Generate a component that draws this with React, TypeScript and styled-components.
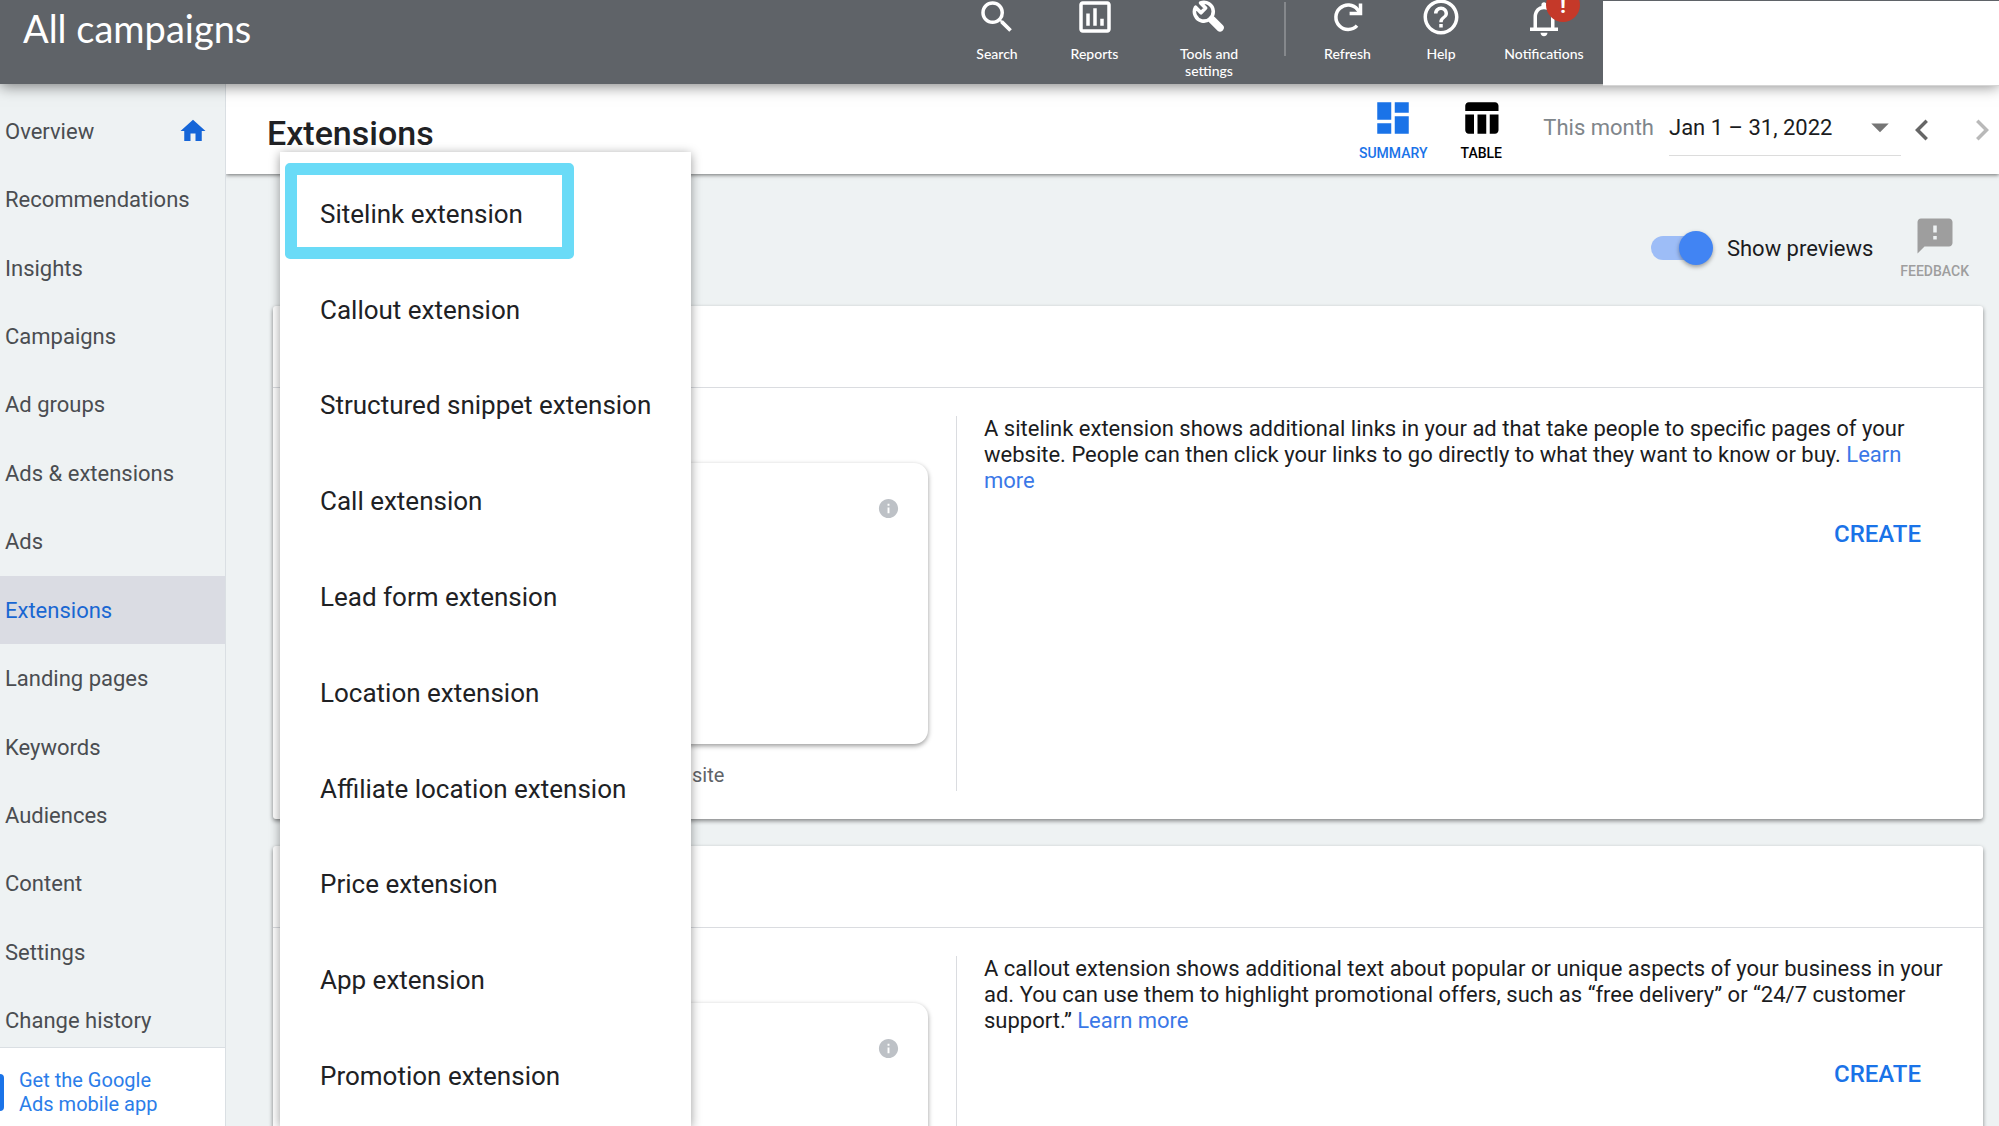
import React from "react";
import styled, { createGlobalStyle } from "styled-components";

const GlobalStyle = createGlobalStyle`
  *, *::before, *::after { box-sizing: border-box; }
  html, body, #root { height: 100%; }
  body {
    margin: 0;
    overflow: hidden;
    background: #eef2f3;
    color: #202124;
    font-family: Roboto, "Noto Sans", sans-serif;
    -webkit-font-smoothing: antialiased;
  }
  button { border: 0; padding: 0; background: none; font-family: inherit; cursor: pointer; }
  a { text-decoration: none; }
  h1, h2, p, ul { margin: 0; padding: 0; }
  ul { list-style: none; }
`;

const icons = {
  search:
    "M15.5 14h-.79l-.28-.27A6.47 6.47 0 0 0 16 9.5 6.5 6.5 0 1 0 9.5 16c1.61 0 3.09-.59 4.23-1.57l.27.28v.79l5 4.99L20.49 19l-4.99-5zm-6 0C7.01 14 5 11.99 5 9.5S7.01 5 9.5 5 14 7.01 14 9.5 11.99 14 9.5 14z",
  reports:
    "M9 17H7v-7h2v7zm4 0h-2V7h2v10zm4 0h-2v-4h2v4zm2 2H5V5h14v14zm0-16H5c-1.1 0-2 .9-2 2v14c0 1.1.9 2 2 2h14c1.1 0 2-.9 2-2V5c0-1.1-.9-2-2-2z",
  help:
    "M11 18h2v-2h-2v2zm1-16C6.48 2 2 6.48 2 12s4.48 10 10 10 10-4.48 10-10S17.52 2 12 2zm0 18c-4.41 0-8-3.59-8-8s3.59-8 8-8 8 3.59 8 8-3.59 8-8 8zm0-14c-2.21 0-4 1.79-4 4h2c0-1.1.9-2 2-2s2 .9 2 2c0 2-3 1.75-3 5h2c0-2.25 3-2.5 3-5 0-2.21-1.79-4-4-4z",
  bell:
    "M12 23c1.1 0 2-.9 2-2h-4c0 1.1.9 2 2 2zm6-6v-5c0-3.07-1.63-5.64-4.5-6.32V5c0-.83-.67-1.5-1.5-1.5s-1.5.67-1.5 1.5v.68C7.64 6.36 6 8.92 6 12v6H4v2h16v-2h-2v-1zm-2 1H8v-6c0-2.48 1.51-4.5 4-4.5s4 2.02 4 4.5v6z",
  home: "M10 20v-6h4v6h5v-8h3L12 3 2 12h3v8z",
  summary:
    "M3 13h8V3H3v10zm0 8h8v-6H3v6zm10 0h8V11h-8v10zm0-18v6h8V3h-8z",
  table:
    "M10 10.02h5V21h-5V10.02zM17 21h3c1.1 0 2-.9 2-2v-9h-5v11zm3-18H5c-1.1 0-2 .9-2 2v3h19V5c0-1.1-.9-2-2-2zM3 19c0 1.1.9 2 2 2h3V10H3v9z",
  left: "M15.41 7.41L14 6l-6 6 6 6 1.41-1.41L10.83 12z",
  right: "M10 6L8.59 7.41 13.17 12l-4.58 4.59L10 18l6-6z",
  caret: "M7 10l5 5 5-5z",
  feedback:
    "M20 2H4c-1.1 0-1.99.9-1.99 2L2 22l4-4h14c1.1 0 2-.9 2-2V4c0-1.1-.9-2-2-2zm-7 12h-2v-2h2v2zm0-4h-2V6h2v4z",
  info:
    "M12 2C6.48 2 2 6.48 2 12s4.48 10 10 10 10-4.48 10-10S17.52 2 12 2zm1 15h-2v-6h2v6zm0-8h-2V7h2v2z",
};

function Icon({ name, size = 42 }: { name: keyof typeof icons; size?: number }) {
  return (
    <svg width={size} height={size} viewBox="0 0 24 24" fill="currentColor" aria-hidden="true">
      <path d={icons[name]} />
    </svg>
  );
}

function WrenchIcon() {
  return (
    <svg width={42} height={42} viewBox="0 0 42 42" fill="none" stroke="currentColor" aria-hidden="true">
      <path d="M7.6 11.2 A9.4 9.4 0 1 0 12.6 6.9 L17.6 12 L13 16.8 Z" strokeWidth="3.6" strokeLinejoin="round" />
      <path d="M24 23.8 L32 31.8" strokeWidth="7.6" strokeLinecap="round" />
    </svg>
  );
}

function RefreshIcon() {
  return (
    <svg width={42} height={42} viewBox="0 0 42 42" fill="none" stroke="currentColor" strokeWidth="3.5" aria-hidden="true">
      <path d="M30 29.6 A12.2 12.2 0 1 1 30.6 13.6 L33.4 17.2" />
      <path d="M33.5 7.4 V17.4 H22.6" />
    </svg>
  );
}

const Page = styled.div`
  display: flex;
  flex-direction: column;
  height: 100vh;
`;

const Header = styled.header`
  position: relative;
  z-index: 3;
  display: flex;
  height: 84px;
  flex: none;
  box-shadow: 0 2px 14px rgba(0, 0, 0, 0.5);
`;

const HeaderBar = styled.div`
  flex: 1;
  display: flex;
  min-width: 0;
  overflow: hidden;
  padding: 0 3px 0 23px;
  background: #5f6368;
  color: #fff;
`;

const AccountArea = styled.div`
  flex: 0 0 396px;
  height: 86px;
  border-top: 1px solid #5f6368;
  border-bottom: 1px solid #d5d5d5;
  background: #fff;
`;

const AccountTitle = styled.div`
  flex: 1;
  padding-top: 8px;
  font-family: Lato, Roboto, sans-serif;
  font-size: 38px;
  line-height: 40px;
  white-space: nowrap;
`;

const HeaderAction = styled.button<{ $width: number }>`
  position: relative;
  display: flex;
  flex-direction: column;
  align-items: center;
  justify-content: flex-start;
  gap: 7px;
  width: ${(p) => p.$width}px;
  height: 84px;
  margin-top: -4px;
  color: #fff;
  font-family: Lato, Roboto, sans-serif;
  font-size: 14px;
  font-weight: 500;
  line-height: 17px;
  svg { flex: none; }
`;

const ActionLabel = styled.span`
  max-width: 90px;
`;

const HeaderDivider = styled.div`
  width: 2px;
  height: 54px;
  margin: 2px 15px 0 9px;
  background: #85888c;
`;

const Badge = styled.span`
  position: absolute;
  top: -8px;
  right: 20px;
  width: 34px;
  height: 34px;
  border-radius: 50%;
  background: #c53929;
  font-family: Roboto, sans-serif;
  font-size: 22px;
  font-weight: 700;
  line-height: 36px;
  text-align: center;
`;

const Body = styled.div`
  flex: 1;
  display: flex;
  min-height: 0;
`;

const Sidebar = styled.nav`
  flex: 0 0 226px;
  display: flex;
  flex-direction: column;
  border-right: 1px solid #dadfe3;
  background: #eef2f3;
`;

const NavList = styled.ul`
  flex: 1;
  display: flex;
  flex-direction: column;
  min-height: 0;
  margin: 13px 0 -8px;
`;

const NavItem = styled.li`
  flex: 1;
  display: flex;
`;

const NavLink = styled.a<{ $active?: boolean }>`
  flex: 1;
  display: flex;
  align-items: center;
  justify-content: space-between;
  padding: 0 17px 0 5px;
  background: ${(p) => (p.$active ? "#dadce3" : "transparent")};
  color: ${(p) => (p.$active ? "#1967d2" : "#4a4d51")};
  font-size: 22px;
  svg { color: #1565d8; }
`;

const AppPromo = styled.a`
  position: relative;
  display: flex;
  align-items: flex-start;
  gap: 15px;
  height: 79px;
  flex: none;
  padding-top: 20px;
  border-top: 1px solid #dadfe3;
  background: #fff;
  color: #2b7de9;
  font-size: 20px;
  line-height: 24px;
`;

const PhoneEdge = styled.span`
  width: 4px;
  height: 37px;
  margin-top: 6px;
  border-radius: 0 4px 4px 0;
  background: #1a73e8;
`;

const Main = styled.main`
  position: relative;
  flex: 1;
  display: flex;
  flex-direction: column;
  min-width: 0;
  overflow: hidden;
`;

const Toolbar = styled.div`
  position: relative;
  z-index: 1;
  display: flex;
  align-items: flex-start;
  height: 90px;
  flex: none;
  padding-left: 41px;
  background: #fff;
  box-shadow: 0 1px 4px rgba(0, 0, 0, 0.55);
`;

const PageTitle = styled.h1`
  flex: 1;
  padding-top: 29px;
  font-size: 34px;
  font-weight: 500;
  line-height: 40px;
`;

const CaptionedButton = styled.button<{ $color: string }>`
  display: flex;
  flex-direction: column;
  align-items: center;
  gap: 6px;
  color: ${(p) => p.$color};
  font-size: 14px;
  font-weight: 500;
  line-height: 16px;
`;

const ViewTabs = styled.div`
  display: flex;
  padding: 13px 18px 0 0;
  ${CaptionedButton} { width: 88px; }
`;

const DateField = styled.label`
  display: flex;
  align-items: center;
  gap: 15px;
  padding-top: 15px;
  color: #80868b;
  font-size: 22px;
`;

const SelectWrap = styled.span`
  display: grid;
  align-items: center;
  width: 232px;
  border-bottom: 1px solid #dcdcdc;
  color: #757575;
  > * { grid-area: 1 / 1; }
  svg { justify-self: end; pointer-events: none; }
`;

const DateSelect = styled.select`
  appearance: none;
  width: 100%;
  height: 56px;
  padding: 0;
  border: 0;
  background: transparent;
  color: #1b1c1e;
  font-family: inherit;
  font-size: 22px;
`;

const Pager = styled.div`
  display: flex;
  gap: 26px;
  padding: 25px 0 0 4px;
`;

const PagerButton = styled.button<{ $muted?: boolean }>`
  display: flex;
  justify-content: center;
  width: 34px;
  color: ${(p) => (p.$muted ? "#b9b9b9" : "#666")};
  svg { flex: none; }
`;

const Options = styled.div`
  display: flex;
  align-items: flex-end;
  justify-content: flex-end;
  gap: 27px;
  padding: 41px 30px 27px 0;
`;

const SwitchLabel = styled.label`
  display: flex;
  align-items: center;
  gap: 14px;
  padding-bottom: 14px;
  color: #1b1c1e;
  font-size: 22px;
`;

const Switch = styled.input`
  appearance: none;
  display: grid;
  align-items: center;
  width: 62px;
  height: 34px;
  margin: 0;
  &::before, &::after { content: ""; grid-area: 1 / 1; }
  &::before { width: 56px; height: 24px; border-radius: 12px; background: #9dbdf7; }
  &::after {
    justify-self: end;
    width: 34px;
    height: 34px;
    border-radius: 50%;
    background: #4184f3;
    box-shadow: 0 2px 4px rgba(0, 0, 0, 0.35);
  }
`;

const Cards = styled.div`
  display: flex;
  flex-direction: column;
  gap: 27px;
  padding: 0 16px 0 47px;
`;

const Card = styled.section`
  border-radius: 3px;
  background: #fff;
  box-shadow: 0 2px 4px rgba(0, 0, 0, 0.45);
`;

const CardHeader = styled.div`
  height: 82px;
  border-bottom: 1px solid #dadce0;
`;

const CardBody = styled.div`
  display: grid;
  grid-template-columns: 2fr 3fr;
  padding: 28px 0;
`;

const PreviewColumn = styled.div`
  height: 375px;
  padding: 47px 28px 0;
  border-right: 1px solid #dadce0;
`;

const Preview = styled.div`
  display: flex;
  justify-content: flex-end;
  height: 281px;
  padding: 34px 28px;
  border-radius: 14px;
  background: #fff;
  box-shadow: 0 2px 5px rgba(0, 0, 0, 0.4);
  color: #bdc1c6;
`;

const PreviewCaption = styled.p`
  padding: 19px 0 0 391px;
  color: #5f6368;
  font-size: 20px;
  line-height: 24px;
`;

const Details = styled.div`
  padding: 0 28px 0 27px;
  color: #1b1c1e;
  font-size: 22px;
  line-height: 26px;
  a { color: #3b78e7; }
`;

const CreateRow = styled.div`
  display: flex;
  justify-content: flex-end;
  padding: 24px 34px 0 0;
`;

const CreateButton = styled.button`
  color: #1a73e8;
  font-size: 24px;
  font-weight: 500;
  line-height: 32px;
`;

const Menu = styled.div`
  position: absolute;
  z-index: 2;
  top: 68px;
  bottom: 0;
  left: 54px;
  display: flex;
  flex-direction: column;
  width: 411px;
  padding: 14px 0 2px;
  background: #fff;
  box-shadow: 0 2px 10px rgba(0, 0, 0, 0.4);
`;

const MenuItem = styled.button`
  position: relative;
  flex: 1;
  padding-left: 40px;
  color: #202124;
  font-size: 26px;
  text-align: left;
`;

const Highlight = styled.span`
  position: absolute;
  inset: -3px 117px 3px 5px;
  border: 12px solid #6adbf7;
  border-radius: 5px;
`;

const navItems = [
  "Overview", "Recommendations", "Insights", "Campaigns", "Ad groups", "Ads & extensions", "Ads",
  "Extensions", "Landing pages", "Keywords", "Audiences", "Content", "Settings", "Change history",
];

const menuItems = [
  "Sitelink extension", "Callout extension", "Structured snippet extension", "Call extension",
  "Lead form extension", "Location extension", "Affiliate location extension", "Price extension",
  "App extension", "Promotion extension",
];

function ExtensionCard({ text, caption }: { text: string; caption?: string }) {
  return (
    <Card>
      <CardHeader />
      <CardBody>
        <PreviewColumn>
          <Preview>
            <Icon name="info" size={23} />
          </Preview>
          {caption && <PreviewCaption>{caption}</PreviewCaption>}
        </PreviewColumn>
        <Details>
          <p>
            {text} <a href="#learn">Learn more</a>
          </p>
          <CreateRow>
            <CreateButton type="button">CREATE</CreateButton>
          </CreateRow>
        </Details>
      </CardBody>
    </Card>
  );
}

export default function App() {
  return (
    <>
      <GlobalStyle />
      <Page>
        <Header>
          <HeaderBar>
            <AccountTitle>All campaigns</AccountTitle>
            <HeaderAction $width={98}><Icon name="search" /><ActionLabel>Search</ActionLabel></HeaderAction>
            <HeaderAction $width={97}><Icon name="reports" /><ActionLabel>Reports</ActionLabel></HeaderAction>
            <HeaderAction $width={132}>
              <WrenchIcon />
              <ActionLabel>Tools and<br />settings</ActionLabel>
            </HeaderAction>
            <HeaderDivider />
            <HeaderAction $width={93}><RefreshIcon /><ActionLabel>Refresh</ActionLabel></HeaderAction>
            <HeaderAction $width={94}><Icon name="help" /><ActionLabel>Help</ActionLabel></HeaderAction>
            <HeaderAction $width={112}>
              <Icon name="bell" />
              <Badge>!</Badge>
              <ActionLabel>Notifications</ActionLabel>
            </HeaderAction>
          </HeaderBar>
          <AccountArea />
        </Header>
        <Body>
          <Sidebar>
            <NavList>
              {navItems.map((item) => (
                <NavItem key={item}>
                  <NavLink href="#nav" $active={item === "Extensions"}>
                    {item}
                    {item === "Overview" && <Icon name="home" size={30} />}
                  </NavLink>
                </NavItem>
              ))}
            </NavList>
            <AppPromo href="#app">
              <PhoneEdge />
              <span>Get the Google<br />Ads mobile app</span>
            </AppPromo>
          </Sidebar>
          <Main>
            <Toolbar>
              <PageTitle>Extensions</PageTitle>
              <ViewTabs>
                <CaptionedButton $color="#1a73e8"><Icon name="summary" />SUMMARY</CaptionedButton>
                <CaptionedButton $color="#000"><Icon name="table" />TABLE</CaptionedButton>
              </ViewTabs>
              <DateField>
                This month
                <SelectWrap>
                  <DateSelect>
                    <option>Jan 1 – 31, 2022</option>
                  </DateSelect>
                  <Icon name="caret" />
                </SelectWrap>
              </DateField>
              <Pager>
                <PagerButton aria-label="Previous"><Icon name="left" /></PagerButton>
                <PagerButton aria-label="Next" $muted><Icon name="right" /></PagerButton>
              </Pager>
            </Toolbar>
            <Options>
              <SwitchLabel>
                <Switch type="checkbox" role="switch" defaultChecked />
                Show previews
              </SwitchLabel>
              <CaptionedButton $color="#9e9e9e"><Icon name="feedback" />FEEDBACK</CaptionedButton>
            </Options>
            <Cards>
              <ExtensionCard
                caption="site"
                text="A sitelink extension shows additional links in your ad that take people to specific pages of your website. People can then click your links to go directly to what they want to know or buy."
              />
              <ExtensionCard text="A callout extension shows additional text about popular or unique aspects of your business in your ad. You can use them to highlight promotional offers, such as “free delivery” or “24/7 customer support.”" />
            </Cards>
            <Menu>
              {menuItems.map((item, index) => (
                <MenuItem key={item} type="button">
                  {index === 0 && <Highlight />}
                  {item}
                </MenuItem>
              ))}
            </Menu>
          </Main>
        </Body>
      </Page>
    </>
  );
}
